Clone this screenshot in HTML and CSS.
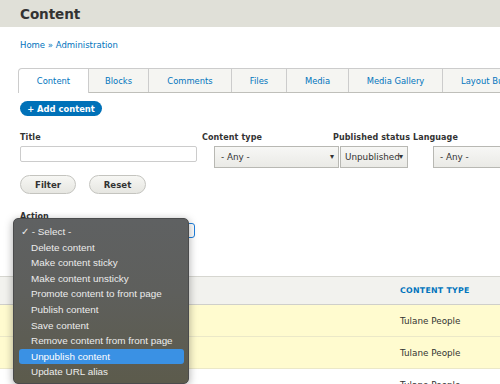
FILE: index.html
```html
<!DOCTYPE html>
<html>
<head>
<meta charset="utf-8">
<link rel="stylesheet" href="styles.css">
</head>
<body>
<header class="page-head"><h1>Content</h1></header>
<main class="main">
  <nav class="crumbs"><a>Home</a> » <a>Administration</a></nav>
  <ul class="tabs">
    <li class="tab active">Content</li>
    <li class="tab w-blocks">Blocks</li>
    <li class="tab w-comments">Comments</li>
    <li class="tab w-files">Files</li>
    <li class="tab w-media">Media</li>
    <li class="tab w-gallery">Media Gallery</li>
    <li class="tab w-layout">Layout Builder</li>
  </ul>
  <div class="add-row"><span class="add-btn">+ Add content</span></div>
  <div class="filters">
    <div class="fitem f-title">
      <label>Title</label>
      <span class="text-input"></span>
    </div>
    <div class="fitem f-type">
      <label>Content type</label>
      <span class="select s-type">- Any -<i class="arr">▾</i></span>
    </div>
    <div class="fitem f-status">
      <label>Published status</label>
      <span class="select s-status">Unpublished<i class="arr">▾</i></span>
    </div>
    <div class="fitem f-lang">
      <label>Language</label>
      <span class="select s-lang">- Any -</span>
    </div>
  </div>
  <div class="buttons">
    <span class="btn b-filter">Filter</span>
    <span class="btn b-reset">Reset</span>
  </div>
  <div class="action">
    <label>Action</label>
    <span class="action-select"></span>
    <ul class="menu">
      <li class="check">✓ - Select -</li>
      <li>Delete content</li>
      <li>Make content sticky</li>
      <li>Make content unsticky</li>
      <li>Promote content to front page</li>
      <li>Publish content</li>
      <li>Save content</li>
      <li>Remove content from front page</li>
      <li class="hl">Unpublish content</li>
      <li>Update URL alias</li>
    </ul>
  </div>
</main>
<table class="grid">
  <thead><tr><th class="c1"></th><th class="c2">Content type</th></tr></thead>
  <tbody>
    <tr class="sel"><td class="c1"></td><td class="c2">Tulane People</td></tr>
    <tr class="sel"><td class="c1"></td><td class="c2">Tulane People</td></tr>
    <tr><td class="c1"></td><td class="c2">Tulane People</td></tr>
  </tbody>
</table>
</body>
</html>
```
FILE: styles.css
```css
* { box-sizing: border-box; }
html, body { margin: 0; padding: 0; }
body {
  width: 500px; height: 384px; overflow: hidden;
  font-family: "DejaVu Sans", Verdana, sans-serif;
  color: #333; background: #fff; position: relative;
}
.page-head {
  background: #e0e0d8; height: 27px; padding: 0 20px;
  display: flex; align-items: center;
}
.page-head h1 { margin: 0; font-size: 13.6px; font-weight: bold; color: #333; letter-spacing: -0.1px; }
.main { padding: 0 0 0 18px; }
.crumbs { margin: 13px 0 0 2px; font-size: 8.5px; color: #0074bd; height: 10px; line-height: 10px; }
.crumbs a { color: #0074bd; }
.tabs {
  list-style: none; margin: 18px 0 0; padding: 0; display: flex;
  height: 25px; border-bottom: 1px solid #bfbfba; white-space: nowrap;
}
.tab {
  font-size: 8.4px; color: #0074bd; background: #f5f5f2;
  border-top: 1px solid #ccc; border-right: 1px solid #ccc;
  display: flex; align-items: center; justify-content: center;
  height: 24px; flex: none;
}
.tab.active { background: #fff; width: 71px; border-left: 1px solid #ccc; border-top-left-radius: 4px; height: 25px; margin-bottom: -1px; }
.w-blocks { width: 60px; }
.w-comments { width: 83px; }
.w-files { width: 55px; }
.w-media { width: 62px; }
.w-gallery { width: 94px; }
.w-layout { width: 90px; justify-content: flex-start; padding-left: 18px; }
.add-row { margin: 8px 0 0 2px; height: 15px; display: flex; }
.add-btn {
  display: flex; align-items: center; justify-content: center; height: 15px;
  background: #0071b8; color: #fff; font-size: 8.4px; font-weight: bold;
  border-radius: 8px; width: 82px; white-space: nowrap;
}
.filters { display: flex; margin: 17px 0 0 2px; }
.fitem { display: flex; flex-direction: column; flex: none; }
.fitem label { font-size: 8px; font-weight: bold; height: 12px; line-height: 10px; color: #333; white-space: nowrap; letter-spacing: 0.1px; }
.f-title { width: 182px; }
.text-input { display: block; width: 177px; height: 16px; border: 1px solid #ccc; border-radius: 2px; margin-top: 1px; }
.f-type { width: 131px; }
.f-status { width: 80px; }
.f-lang { width: 90px; }
.select {
  display: flex; align-items: center; height: 22px; margin-top: 1px;
  border: 1px solid #b8b8b3; background: linear-gradient(#f7f7f5, #eaeae6);
  font-size: 8.8px; color: #333; padding-left: 6px; position: relative; white-space: nowrap;
}
.s-type { width: 125px; margin-left: 12px; }
.s-status { width: 68px; margin-left: 7px; padding-left: 4px; }
.s-lang { width: 80px; margin-left: 20px; }
.arr { font-style: normal; position: absolute; right: 4px; top: 5px; font-size: 8px; }
.buttons { display: flex; margin: 7px 0 0 2px; gap: 13px; }
.btn {
  display: flex; align-items: center; justify-content: center; height: 19px;
  border: 1px solid #c4c4bf; border-radius: 10px; background: linear-gradient(#f7f7f4, #e6e6e1);
  font-size: 8.6px; font-weight: bold; color: #333;
}
.b-filter { width: 56px; }
.b-reset { width: 57px; }
.action { position: relative; margin: 18px 0 0 2px; }
.action label { display: block; font-size: 8px; font-weight: bold; height: 10px; line-height: 10px; }
.action-select {
  display: block; width: 175px; height: 15px; margin-top: 1px;
  border: 1px solid #1f7fdc; border-radius: 3px;
}
.menu {
  position: absolute; left: -7px; top: 6px; width: 176px; height: 166px;
  margin: 0; padding: 5px 4px 0 5px; list-style: none;
  background: linear-gradient(#5f6162 0%, #5e5f5c 45%, #5c5b4c 100%);
  border: 1px solid #4a4b4c; border-radius: 5px;
  box-shadow: 0 2px 8px rgba(0,0,0,0.35);
  z-index: 5;
}
.menu li {
  font-family: "Liberation Sans", Arial, sans-serif; font-size: 9.9px; color: #ececec;
  height: 15.6px; line-height: 15.6px; padding-left: 12px; border-radius: 3px; white-space: nowrap;
}
.menu li.check { padding-left: 2px; }
.menu li.hl { background: #3a91e4; color: #fff; }
.grid {
  position: absolute; left: 0; top: 276px; width: 500px; border-collapse: collapse;
}
.grid th { background: #f2f2ee; height: 28px; border-top: 1px solid #d6d6d0; border-bottom: 1px solid #cfcfca; text-align: left; padding: 0; }
.grid th.c2 { font-size: 7.8px; font-weight: bold; color: #0074bd; text-transform: uppercase; letter-spacing: 0.3px; }
.c1 { width: 400px; }
.grid td { height: 32px; border-bottom: 1px solid #ebe8c8; font-size: 8.8px; color: #333; padding: 0; }
.grid tr.sel td { background: #fffbcf; }
```
